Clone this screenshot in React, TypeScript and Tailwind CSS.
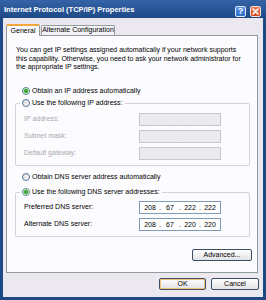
import React from "react";

function Radio({ checked }: { checked?: boolean }) {
  return (
    <span className="w-[8px] h-[8px] rounded-full border border-[#52739a] bg-linear-to-br from-[#d8d8dc] to-white flex items-center justify-center shrink-0">
      {checked && <span className="w-[4px] h-[4px] rounded-full bg-[#36a336] shadow-[0_0_1px_1px_#a8dca0]" />}
    </span>
  );
}

function IpField({ values, disabled }: { values?: string[]; disabled?: boolean }) {
  const segs = values ?? ["", "", "", ""];
  return (
    <div
      className={
        disabled
          ? "w-[82px] h-[13px] border border-[#c8c8ce] bg-[#ebeaef] flex items-center pl-[2px] text-[#c4c4c8]"
          : "w-[82px] h-[13px] border border-[#7f9db9] bg-white flex items-center pl-[2px] text-black"
      }
    >
      {segs.map((v, i) => (
        <React.Fragment key={i}>
          <span className="w-[16px] text-center text-[7px] leading-[11px]">{v}</span>
          {i < 3 && <span className="w-[4px] text-center text-[7px] leading-[11px]">.</span>}
        </React.Fragment>
      ))}
    </div>
  );
}

function Row({ label, disabled, values }: { label: string; disabled?: boolean; values?: string[] }) {
  return (
    <div className="flex items-center h-[13px] pl-[8px]">
      <span className={disabled ? "w-[115px] text-[7px] text-[#a9a8ae]" : "w-[115px] text-[7px] text-black"}>{label}</span>
      <IpField disabled={disabled} values={values} />
    </div>
  );
}

export default function App() {
  return (
    <div className="w-[266px] h-[300px] flex flex-col bg-[#1d4a86] overflow-hidden font-['Liberation_Sans',Arial,sans-serif] text-black">
      {/* Title bar */}
      <div className="h-[18px] flex items-start bg-linear-to-b from-[#3463a8] to-[#1d4a86] shrink-0">
        <div className="flex-1 pl-[4px] pt-[4px] text-[7.5px] leading-[11px] font-bold text-white whitespace-nowrap">
          Internet Protocol (TCP/IP) Properties
        </div>
        <div className="pt-[6px] pr-[5px] flex gap-[4px]">
          <div className="w-[11px] h-[11px] rounded-[2px] border border-[#dfe8f5] bg-linear-to-b from-[#5a93e6] to-[#2f6cc8] flex items-center justify-center text-white text-[9px] font-bold leading-none">
            ?
          </div>
          <div className="w-[11px] h-[11px] rounded-[2px] border border-[#f3e0d8] bg-linear-to-b from-[#ec7a55] to-[#d4461f] flex items-center justify-center">
            <svg width="7" height="7" viewBox="0 0 7 7">
              <path d="M1 1 L6 6 M6 1 L1 6" stroke="white" strokeWidth="1.6" strokeLinecap="round" />
            </svg>
          </div>
        </div>
      </div>

      {/* Body */}
      <div className="flex-1 mx-[3px] mb-[3px] bg-[#ebe9ef] flex flex-col pt-[6px]">
        {/* Tabs */}
        <div className="flex items-end h-[11px] pl-[3px] relative z-10">
          <div className="h-[12px] -mb-px w-[34px] bg-[#fcfcfe] border-x border-[#919b9c] border-t-2 border-t-[#f3a83b] rounded-t-[2px] text-[7px] flex items-center justify-center">
            General
          </div>
          <div className="h-[10px] w-[74px] ml-[1px] bg-[#f4f3f6] border-x border-t border-[#919b9c] rounded-t-[2px] text-[7px] flex items-center justify-center whitespace-nowrap">
            Alternate Configuration
          </div>
        </div>

        {/* Panel */}
        <div className="ml-[3px] mr-[5px] h-[238px] border border-[#919b9c] bg-[#fcfcfe] flex flex-col shrink-0">
          <div className="pt-[10px] pl-[9px] h-[36px] text-[7px] leading-[8.5px]">
            <div className="whitespace-nowrap">You can get IP settings assigned automatically if your network supports</div>
            <div className="whitespace-nowrap">this capability. Otherwise, you need to ask your network administrator for</div>
            <div className="whitespace-nowrap">the appropriate IP settings.</div>
          </div>

          <div className="mt-[14px] ml-[15px] h-[10px] flex items-center gap-[2px] text-[7px]">
            <Radio checked />
            <span>Obtain an IP address automatically</span>
          </div>

          <div className="mt-[7px] ml-[8px] mr-[7px] border border-[#d3d3d8] rounded-[2px] pb-[5px] flex flex-col">
            <div className="-mt-[6px] ml-[4px] self-start bg-[#fcfcfe] px-[2px] h-[10px] flex items-center gap-[2px] text-[7px]">
              <Radio />
              <span>Use the following IP address:</span>
            </div>
            <div className="mt-[5px] flex flex-col gap-[4px]">
              <Row label="IP address:" disabled />
              <Row label="Subnet mask:" disabled />
              <Row label="Default gateway:" disabled />
            </div>
          </div>

          <div className="mt-[6px] ml-[15px] h-[10px] flex items-center gap-[2px] text-[7px]">
            <Radio />
            <span>Obtain DNS server address automatically</span>
          </div>

          <div className="mt-[10px] ml-[8px] mr-[7px] border border-[#d3d3d8] rounded-[2px] pb-[5px] flex flex-col">
            <div className="-mt-[6px] ml-[4px] self-start bg-[#fcfcfe] px-[2px] h-[10px] flex items-center gap-[2px] text-[7px]">
              <Radio checked />
              <span>Use the following DNS server addresses:</span>
            </div>
            <div className="mt-[4px] flex flex-col gap-[4px]">
              <Row label="Preferred DNS server:" values={["208", "67", "222", "222"]} />
              <Row label="Alternate DNS server:" values={["208", "67", "220", "220"]} />
            </div>
          </div>

          <div className="mt-[12px] mr-[5px] self-end w-[60px] h-[12px] rounded-[2px] border border-[#3c4f66] bg-linear-to-b from-white to-[#e3e2e6] flex items-center justify-center text-[7px]">
            Advanced...
          </div>
        </div>

        {/* Bottom buttons */}
        <div className="mt-[5px] pr-[4px] flex justify-end gap-[5px]">
          <div className="w-[47px] h-[12px] rounded-[2px] border border-[#3c4f66] bg-linear-to-b from-white to-[#e3e2e6] shadow-[inset_0_0_0_1px_#f0c27a] flex items-center justify-center text-[7px]">
            OK
          </div>
          <div className="w-[48px] h-[12px] rounded-[2px] border border-[#3c4f66] bg-linear-to-b from-white to-[#e3e2e6] flex items-center justify-center text-[7px]">
            Cancel
          </div>
        </div>
      </div>
    </div>
  );
}
